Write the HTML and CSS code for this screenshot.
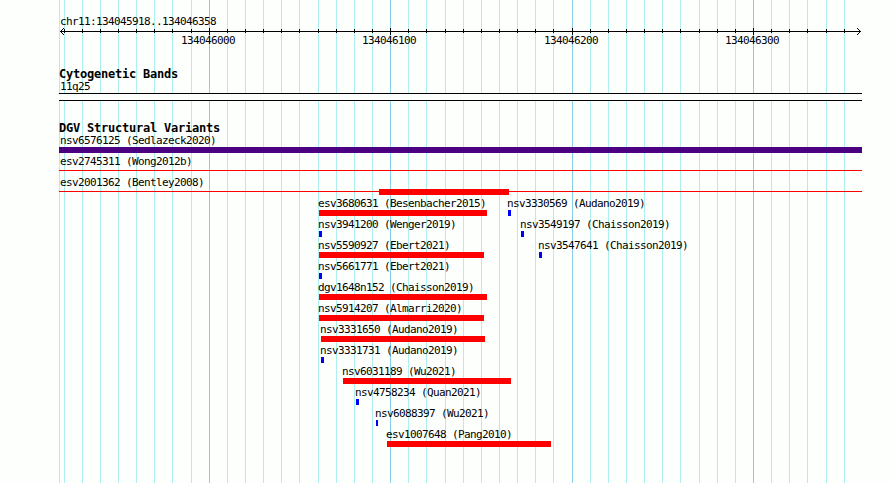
FILE: index.html
```html
<!DOCTYPE html>
<html>
<head lang="en">
    <meta charset="UTF-8">
    <title>chr11:134045918..134046358</title>
    <link rel="stylesheet" href="styles.css">
</head>
<body>
    <svg class="grid" id="grid" width="890" height="483" shape-rendering="crispEdges"></svg>
    <div class="panel">
        <div class="region"><span class="label" id="region">chr11:134045918..134046358</span></div>
        <svg class="ruler" id="ruler" width="803" height="21" shape-rendering="crispEdges"></svg>
        <h2 class="title">Cytogenetic Bands</h2>
        <div class="cyto">
            <span class="label">11q25</span>
            <div class="band"></div>
        </div>
        <h2 class="title">DGV Structural Variants</h2>
        <div id="tracks"></div>
    </div>

    <script src="script.js"></script>
</body>
</html>
```
FILE: styles.css
```css
*{
    padding: 0;
    margin: 0;
}
body{
    width: 890px;
    height: 483px;
    overflow: hidden;
    position: relative;
    background: #fdfffc;
    color: #000;
    font-family: "DejaVu Sans Mono", monospace;
}
.grid{
    position: absolute;
    left: 0;
    top: 0;
}
.panel{
    position: relative;
    width: 803px;
    padding: 15px 0 0 59px;
}
.label{
    display: block;
    height: 13px;
    line-height: 13px;
    padding-left: 1px;
    font-size: 11px;
    letter-spacing: -0.62px;
    white-space: nowrap;
}
.region{
    height: 11px;
}
.ruler{
    display: block;
    height: 21px;
    overflow: visible;
}
.tick-text{
    font-size: 11px;
    letter-spacing: -0.62px;
}
.title{
    height: 13px;
    line-height: 13px;
    font-size: 12px;
    font-weight: bold;
    letter-spacing: -0.22px;
    white-space: nowrap;
}
.ruler + .title{
    margin-top: 21px;
}
.cyto{
    height: 42px;
    margin-top: -1px;
}
.band{
    height: 6px;
    border-top: 1px solid #000;
    border-bottom: 1px solid #000;
    background: #fdfffc;
}
#tracks{
    margin-top: -1px;
}
.row{
    display: flex;
    height: 21px;
}
.feature{
    flex: none;
}
.gain .label,
.loss .label{
    padding-left: 0;
    text-indent: -1px;
}
.bar{
    height: 6px;
    background: #f00;
}
.gain .bar{
    background: #00f;
}
.complex .bar{
    background: #4b0082;
}
.line .bar{
    height: 1px;
    margin-top: 2px;
}
.core{
    height: 6px;
    margin-top: -3px;
    background: #f00;
}
```
FILE: script.js
```js
var LEFT = 59;
var START = 134045918;
var SCALE = 127 / 70;
var NS = 'http://www.w3.org/2000/svg';

// one list per row: [name, left, width, type, core left, core width]
var rows = [
    [['nsv6576125 (Sedlazeck2020)', 0, 803, 'complex']],
    [['esv2745311 (Wong2012b)', 0, 803, 'line']],
    [['esv2001362 (Bentley2008)', 0, 803, 'line', 320, 130]],
    [['esv3680631 (Besenbacher2015)', 260, 168, 'loss'], ['nsv3330569 (Audano2019)', 449, 3, 'gain']],
    [['nsv3941200 (Wenger2019)', 260, 3, 'gain'], ['nsv3549197 (Chaisson2019)', 462, 3, 'gain']],
    [['nsv5590927 (Ebert2021)', 260, 165, 'loss'], ['nsv3547641 (Chaisson2019)', 480, 3, 'gain']],
    [['nsv5661771 (Ebert2021)', 260, 3, 'gain']],
    [['dgv1648n152 (Chaisson2019)', 260, 168, 'loss']],
    [['nsv5914207 (Almarri2020)', 260, 165, 'loss']],
    [['nsv3331650 (Audano2019)', 262, 164, 'loss']],
    [['nsv3331731 (Audano2019)', 262, 3, 'gain']],
    [['nsv6031189 (Wu2021)', 284, 168, 'loss']],
    [['nsv4758234 (Quan2021)', 297, 3, 'gain']],
    [['nsv6088397 (Wu2021)', 317, 2, 'gain']],
    [['esv1007648 (Pang2010)', 328, 164, 'loss']]
];

function shape(parent, name, attrs){
    var el = document.createElementNS(NS, name);
    for(var key in attrs){
        el.setAttribute(key, attrs[key]);
    }
    parent.appendChild(el);
    return el;
}

function drawScale(){
    var grid = document.getElementById('grid');
    var ruler = document.getElementById('ruler');
    shape(grid, 'rect', {x: LEFT, y: 0, width: 1, height: 483, fill: '#afeeee'});
    shape(ruler, 'rect', {x: 1, y: 5, width: 801, height: 1});
    shape(ruler, 'path', {
        d: 'M5 2L1.5 5.5L5 9M798 2L801.5 5.5L798 9',
        fill: 'none', stroke: '#000', 'shape-rendering': 'auto'
    });
    for(var pos = 134045920; pos < 134046358; pos += 10){
        var major = pos % 100 == 0;
        var x = Math.floor((pos - START) * SCALE + 1.38);
        shape(grid, 'rect', {x: LEFT + x, y: 0, width: 1, height: 483, fill: major ? '#87ceeb' : '#afeeee'});
        shape(ruler, 'rect', {x: x, y: major ? 2 : 3, width: 1, height: major ? 7 : 4});
        if(major){
            var text = shape(ruler, 'text', {x: x - 28, y: 18, 'class': 'tick-text'});
            text.textContent = pos;
        }
    }
}

function drawRows(){
    var tracks = document.getElementById('tracks');
    for(var i = 0;i < rows.length;i++){
        var row = document.createElement('div');
        var end = 0;
        row.className = 'row';
        for(var j = 0;j < rows[i].length;j++){
            var f = rows[i][j];
            var feature = document.createElement('div');
            var core = f[4] ? '<div class="core" style="margin-left:' + f[4] + 'px;width:' + f[5] + 'px"></div>' : '';
            feature.className = 'feature ' + f[3];
            feature.style.marginLeft = (f[1] - end) + 'px';
            feature.style.width = f[2] + 'px';
            feature.innerHTML = '<span class="label">' + f[0] + '</span><div class="bar"></div>' + core;
            row.appendChild(feature);
            end = f[1] + f[2];
        }
        tracks.appendChild(row);
    }
}

drawScale();
drawRows();
```
